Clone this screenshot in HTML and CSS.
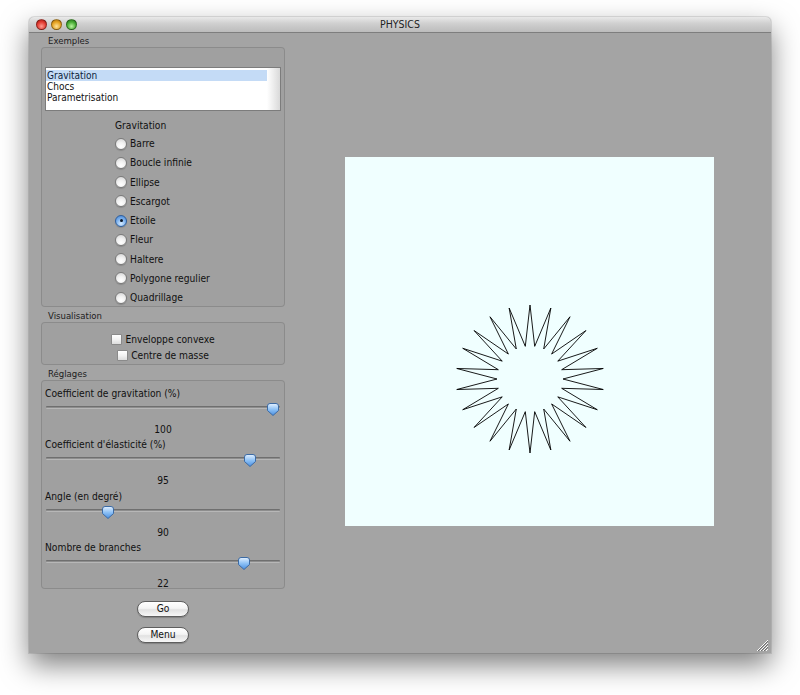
FILE: index.html
```html
<!DOCTYPE html>
<html lang="fr">
<head>
<meta charset="utf-8">
<title>PHYSICS</title>
<link rel="stylesheet" href="styles.css">
</head>
<body>
<div class="window">
  <div class="titlebar">
    <div class="lights">
      <span class="light red"></span>
      <span class="light yellow"></span>
      <span class="light green"></span>
    </div>
    <div class="title">PHYSICS</div>
  </div>
  <div class="body">
    <div class="sidebar">
      <div class="group-title first">Exemples</div>
      <div class="group group-examples">
        <div class="list">
          <div class="list-items">
            <div class="item selected">Gravitation</div>
            <div class="item">Chocs</div>
            <div class="item">Parametrisation</div>
          </div>
          <div class="list-scroll"></div>
        </div>
        <div class="radio-group">
          <div class="radio-label">Gravitation</div>
          <div class="radios">
            <div class="radio"><span class="radio-btn"></span>Barre</div>
            <div class="radio"><span class="radio-btn"></span>Boucle infinie</div>
            <div class="radio"><span class="radio-btn"></span>Ellipse</div>
            <div class="radio"><span class="radio-btn"></span>Escargot</div>
            <div class="radio"><span class="radio-btn checked"></span>Etoile</div>
            <div class="radio"><span class="radio-btn"></span>Fleur</div>
            <div class="radio"><span class="radio-btn"></span>Haltere</div>
            <div class="radio"><span class="radio-btn"></span>Polygone regulier</div>
            <div class="radio"><span class="radio-btn"></span>Quadrillage</div>
          </div>
        </div>
      </div>

      <div class="group-title">Visualisation</div>
      <div class="group group-visu">
        <div class="check"><span class="check-box"></span>Enveloppe convexe</div>
        <div class="check"><span class="check-box"></span>Centre de masse</div>
      </div>

      <div class="group-title">Réglages</div>
      <div class="group group-settings">
        <div class="setting">
          <div class="setting-label">Coefficient de gravitation (%)</div>
          <div class="slider"><div class="track"></div><svg class="thumb" style="left:221px" viewBox="0 0 12 13" width="12" height="13"><defs><linearGradient id="tg1" x1="0" y1="0" x2="0" y2="1"><stop offset="0" stop-color="#e4f1ff"/><stop offset="0.5" stop-color="#8cc0f5"/><stop offset="1" stop-color="#4a8fe0"/></linearGradient></defs><path d="M0.5,3 Q0.5,0.5 3,0.5 H9 Q11.5,0.5 11.5,3 V7.5 L6,12.5 L0.5,7.5 Z" fill="url(#tg1)" stroke="#3c6aa3" stroke-width="1"/></svg></div>
          <div class="setting-value">100</div>
        </div>
        <div class="setting">
          <div class="setting-label">Coefficient d'élasticité (%)</div>
          <div class="slider"><div class="track"></div><svg class="thumb" style="left:198px" viewBox="0 0 12 13" width="12" height="13"><path d="M0.5,3 Q0.5,0.5 3,0.5 H9 Q11.5,0.5 11.5,3 V7.5 L6,12.5 L0.5,7.5 Z" fill="url(#tg1)" stroke="#3c6aa3" stroke-width="1"/></svg></div>
          <div class="setting-value">95</div>
        </div>
        <div class="setting">
          <div class="setting-label">Angle (en degré)</div>
          <div class="slider"><div class="track"></div><svg class="thumb" style="left:56px" viewBox="0 0 12 13" width="12" height="13"><path d="M0.5,3 Q0.5,0.5 3,0.5 H9 Q11.5,0.5 11.5,3 V7.5 L6,12.5 L0.5,7.5 Z" fill="url(#tg1)" stroke="#3c6aa3" stroke-width="1"/></svg></div>
          <div class="setting-value">90</div>
        </div>
        <div class="setting">
          <div class="setting-label">Nombre de branches</div>
          <div class="slider"><div class="track"></div><svg class="thumb" style="left:192px" viewBox="0 0 12 13" width="12" height="13"><path d="M0.5,3 Q0.5,0.5 3,0.5 H9 Q11.5,0.5 11.5,3 V7.5 L6,12.5 L0.5,7.5 Z" fill="url(#tg1)" stroke="#3c6aa3" stroke-width="1"/></svg></div>
          <div class="setting-value">22</div>
        </div>
      </div>

      <div class="buttons">
        <button class="btn">Go</button>
        <button class="btn">Menu</button>
      </div>
    </div>

    <div class="stage">
      <svg class="canvas" width="369" height="369" viewBox="0 0 369 369">
        <polygon fill="none" stroke="#000" stroke-width="0.9" stroke-linejoin="miter" points="185,148 189.7,189.34 205.85,151 198.71,191.98 225.01,159.75 206.61,197.06 240.93,173.54 212.76,204.16 252.31,191.26 216.66,212.7 258.25,211.47 218,222 258.25,232.53 216.66,231.3 252.31,252.74 212.76,239.84 240.93,270.46 206.61,246.94 225.01,284.25 198.71,252.02 205.85,293 189.7,254.66 185,296 180.3,254.66 164.15,293 171.29,252.02 144.99,284.25 163.39,246.94 129.07,270.46 157.24,239.84 117.69,252.74 153.34,231.3 111.75,232.53 152,222 111.75,211.47 153.34,212.7 117.69,191.26 157.24,204.16 129.07,173.54 163.39,197.06 144.99,159.75 171.29,191.98 164.15,151 180.3,189.34"/>
      </svg>
    </div>
  </div>
  <svg class="grip" width="12" height="12" viewBox="0 0 12 12">
    <line x1="1" y1="12" x2="12" y2="1" stroke="#fafafa" stroke-width="1"/>
    <line x1="2" y1="12" x2="12" y2="2" stroke="#6e6e6e" stroke-width="1"/>
    <line x1="4" y1="12" x2="12" y2="4" stroke="#fafafa" stroke-width="1"/>
    <line x1="5" y1="12" x2="12" y2="5" stroke="#6e6e6e" stroke-width="1"/>
    <line x1="7" y1="12" x2="12" y2="7" stroke="#fafafa" stroke-width="1"/>
    <line x1="8" y1="12" x2="12" y2="8" stroke="#6e6e6e" stroke-width="1"/>
    <line x1="10" y1="12" x2="12" y2="10" stroke="#fafafa" stroke-width="1"/>
  </svg>
</div>
</body>
</html>
```

FILE: styles.css
```css
* { box-sizing: border-box; }

html, body {
  margin: 0;
  padding: 0;
  background: #ffffff;
}

body {
  min-height: 695px;
  padding-top: 17px;
  font-family: "DejaVu Sans Condensed", "DejaVu Sans", sans-serif;
  font-stretch: condensed;
  font-size: 10px;
  color: #111;
}

.window {
  position: relative;
  margin: 0 0 0 29px;
  width: 742px;
  height: 636px;
  background: #a4a4a4;
  border-radius: 5px 5px 0 0;
  box-shadow: 0 12px 28px rgba(0, 0, 0, 0.5), 0 0 0 1px rgba(0, 0, 0, 0.1);
  display: flex;
  flex-direction: column;
}

.titlebar {
  height: 16px;
  flex: none;
  display: flex;
  align-items: center;
  position: relative;
  background: linear-gradient(#e9e9e9, #cfcfcf 45%, #bcbcbc);
  border-bottom: 1px solid #7e7e7e;
  border-radius: 5px 5px 0 0;
}

.lights {
  display: flex;
  gap: 4px;
  padding-left: 7px;
  position: relative;
  z-index: 1;
}

.light {
  width: 11px;
  height: 11px;
  border-radius: 50%;
  border: 1px solid rgba(0, 0, 0, 0.35);
}
.light.red { background: radial-gradient(circle at 50% 70%, #ff9a90 0, #e23c32 55%, #a5180f 100%); }
.light.yellow { background: radial-gradient(circle at 50% 70%, #ffe39a 0, #e6a323 55%, #a86a0a 100%); }
.light.green { background: radial-gradient(circle at 50% 70%, #b8f59e 0, #48ad35 55%, #22741a 100%); }

.title {
  position: absolute;
  left: 0;
  right: 0;
  text-align: center;
  font-size: 10.5px;
  line-height: 15px;
  color: #222;
}

.body {
  flex: 1;
  display: flex;
  min-height: 0;
}

.sidebar {
  width: 259px;
  flex: none;
  padding-left: 12px;
  display: flex;
  flex-direction: column;
}

.group-title {
  width: 244px;
  padding-left: 7px;
  line-height: 12px;
  height: 12px;
  margin-top: 3px;
  font-size: 9.5px;
  color: #1c1c1c;
}
.group-title.first { margin-top: 2px; }

.group {
  width: 244px;
  border: 1px solid rgba(0, 0, 0, 0.13);
  border-radius: 4px;
  background: rgba(0, 0, 0, 0.025);
}

.group-examples {
  padding: 19px 3px 0 3px;
  height: 260.25px;
}

.list {
  height: 44px;
  background: #fff;
  border: 1px solid #7c7c7c;
  display: flex;
}

.list-items {
  flex: 1;
  padding-top: 2px;
}

.item {
  line-height: 11px;
  height: 11px;
  padding-left: 1px;
  color: #111;
}
.item.selected { background: #c4dbf6; color: #0d1f3c; }

.list-scroll {
  width: 13px;
  background: linear-gradient(90deg, #ffffff, #f0f0f0 40%, #d9d9d9);
}

.radio-group {
  padding-left: 70px;
}

.radio-label {
  margin-top: 7px;
  padding-top: 1px;
  line-height: 14px;
  height: 14px;
  font-size: 10.2px;
}

.radios { margin-top: 1px; }

.radio {
  height: 19.25px;
  padding-top: 2px;
  display: flex;
  align-items: center;
  font-size: 10.2px;
}

.radio-btn {
  width: 12px;
  height: 12px;
  border-radius: 50%;
  margin-right: 3px;
  border: 1px solid #7a7a7a;
  background: radial-gradient(circle at 50% 75%, #ffffff 0, #f1f1f1 45%, #cfcfcf 100%);
  box-shadow: 0 1px 1px rgba(0, 0, 0, 0.15);
  position: relative;
}

.radio-btn.checked {
  border-color: #2f5f9d;
  background: radial-gradient(circle at 50% 75%, #d8ecff 0, #7fb3ee 50%, #3f7fd0 100%);
}
.radio-btn.checked::after {
  content: "";
  position: absolute;
  left: 3.5px;
  top: 3.5px;
  width: 3px;
  height: 3px;
  border-radius: 50%;
  background: #0b1626;
}

.group-visu {
  padding: 7px 0 2px;
  height: 42.75px;
}

.check {
  height: 16px;
  padding-top: 2px;
  display: flex;
  align-items: center;
  justify-content: center;
  font-size: 10.2px;
}

.check-box {
  width: 11px;
  height: 11px;
  margin-right: 3px;
  border: 1px solid #8a8a8a;
  border-radius: 1px;
  background: linear-gradient(#ffffff, #f2f2f2 50%, #dcdcdc);
}

.group-settings {
  padding: 4px 3px 0;
  height: 209px;
}

.setting + .setting { margin-top: 1.3px; }

.setting-label {
  padding-top: 2px;
  line-height: 14px;
  height: 14px;
  font-size: 10.2px;
}

.slider {
  position: relative;
  height: 15px;
  padding-top: 2px;
  margin: 0 1px;
  display: flex;
  align-items: center;
}

.track {
  width: 100%;
  height: 3px;
  border-top: 1px solid #6f6f6f;
  border-bottom: 1px solid #b7b7b7;
  background: #8d8d8d;
  border-radius: 1px;
}

.thumb {
  position: absolute;
  top: 4px;
  display: block;
}

.setting-value {
  margin-top: 7px;
  padding-top: 2px;
  line-height: 14px;
  height: 14px;
  text-align: center;
  font-size: 10.2px;
}

.buttons {
  width: 244px;
  display: flex;
  flex-direction: column;
  align-items: center;
  gap: 10px;
  margin-top: 11.5px;
}

.btn {
  width: 52px;
  height: 16px;
  padding: 0;
  font-family: inherit;
  font-stretch: condensed;
  font-size: 10.2px;
  line-height: 14px;
  color: #111;
  border: 1px solid #5e5e5e;
  border-radius: 8px;
  background: linear-gradient(#ffffff, #f4f4f4 45%, #e2e2e2 55%, #f7f7f7);
  box-shadow: 0 1px 1px rgba(0, 0, 0, 0.2);
}

.stage {
  flex: 1;
  display: flex;
  align-items: center;
  justify-content: center;
  padding-bottom: 3px;
}

.canvas {
  display: block;
  background: #f0ffff;
}

.grip {
  position: absolute;
  right: 3px;
  bottom: 2px;
}
```
